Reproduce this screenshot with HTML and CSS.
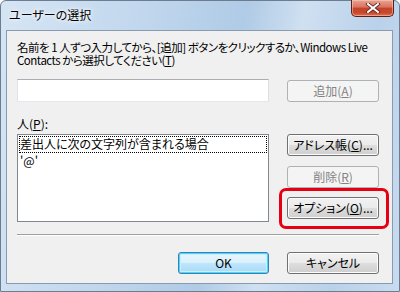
FILE: index.html
```html
<!DOCTYPE html>
<html lang="ja">
<head>
<meta charset="utf-8">
<link rel="stylesheet" href="styles.css">
</head>
<body>
<div class="window">
  <div class="titlebar">
    <span class="title">ユーザーの選択</span>
    <div class="close">
      <svg width="16" height="10" viewBox="0 0 16 10"><path d="M3 1 L13 9 M13 1 L3 9" stroke="#5a2020" stroke-width="3.6" stroke-linecap="square"/><path d="M3 1 L13 9 M13 1 L3 9" stroke="#ffffff" stroke-width="2" stroke-linecap="square"/></svg>
    </div>
  </div>
  <div class="client">
    <p class="intro"><span class="line">名前を 1 人ずつ入力してから、[追加] ボタンをクリックするか、Windows Live</span><span class="line">Contacts から選択してください(<u>T</u>)</span></p>
    <div class="row input-row">
      <div class="textbox"></div>
      <button class="btn disabled">追加(<u>A</u>)</button>
    </div>
    <div class="label">人(<u>P</u>):</div>
    <div class="row list-row">
      <div class="listbox">
        <div class="item focused">差出人に次の文字列が含まれる場合</div>
        <div class="item">'@'</div>
      </div>
      <div class="side">
        <button class="btn">アドレス帳(<u>C</u>)...</button>
        <button class="btn disabled">削除(<u>R</u>)</button>
        <div class="highlight"><button class="btn">オプション(<u>O</u>)...</button></div>
      </div>
    </div>
    <div class="separator"></div>
    <div class="footer">
      <button class="btn default">OK</button>
      <button class="btn">キャンセル</button>
    </div>
  </div>
</div>
</body>
</html>
```

FILE: styles.css
```css
html, body {
  margin: 0;
  padding: 0;
}
body {
  width: 400px;
  height: 292px;
  overflow: hidden;
  background: #ffffff;
  font-family: "Noto Sans CJK JP", "Noto Sans", sans-serif;
  font-size: 12px;
  color: #000;
  font-feature-settings: "palt" 1;
}
.window {
  box-sizing: border-box;
  width: 400px;
  height: 292px;
  border: 1px solid #6b7d8f;
  border-radius: 6px 6px 0 0;
  background: linear-gradient(100deg, #d6e5f4 0%, #c2d8ee 30%, #b0cbe6 55%, #cfe0f1 68%, #b9d1ea 85%, #c8dcf0 100%);
  display: flex;
  flex-direction: column;
  padding: 0 6px 7px 5px;
}
.titlebar {
  height: 29px;
  flex: none;
  display: flex;
  align-items: flex-start;
  justify-content: space-between;
}
.title {
  margin: 6px 0 0 3px;
  font-size: 12px;
  line-height: 16px;
  color: #000;
  text-shadow: 0 0 6px #ffffff, 0 0 3px #ffffff;
}
.close {
  width: 43px;
  height: 17px;
  margin-top: -1px;
  margin-right: -1px;
  box-sizing: border-box;
  border: 1px solid #5c1f14;
  border-top: none;
  border-radius: 0 0 5px 5px;
  background: linear-gradient(#e8a493 0%, #d9735c 45%, #c3432b 50%, #c9482c 80%, #e07050 100%);
  box-shadow: inset 0 0 0 1px rgba(255,210,200,0.5);
  display: flex;
  align-items: center;
  justify-content: center;
}
.close svg { display: block; }
.client {
  flex: 1;
  box-sizing: border-box;
  border: 1px solid #8a9bb0;
  background: #f0f0f0;
  padding: 10px 0 0 10px;
  display: flex;
  flex-direction: column;
}
.intro {
  margin: 0;
  line-height: 13px;
  font-size: 11.5px;
  letter-spacing: -0.5px;
  display: flex;
  flex-direction: column;
}
.line {
  white-space: nowrap;
  height: 13px;
}
u { text-decoration: underline; text-underline-offset: 1px; }
.row {
  display: flex;
  gap: 18px;
}
.input-row {
  margin-top: 12px;
  align-items: flex-start;
}
.textbox {
  box-sizing: border-box;
  width: 252px;
  height: 23px;
  background: #fff;
  border: 1px solid #abadb3;
  border-color: #abadb3 #dbdfe6 #e3e9ef #e2e3ea;
}
.btn {
  box-sizing: border-box;
  width: 92px;
  height: 22px;
  padding: 0;
  font-family: inherit;
  font-feature-settings: "palt" 1;
  font-size: 12px;
  line-height: 18px;
  color: #000;
  border: 1px solid #707070;
  border-radius: 3px;
  background: linear-gradient(#f2f2f2 0%, #ebebeb 48%, #dddddd 52%, #cfcfcf 100%);
  box-shadow: inset 0 0 0 1px #fcfcfc;
}
.input-row .btn { margin-top: 1px; }
.btn.disabled {
  color: #838383;
  border-color: #adb2b5;
  background: #f4f4f4;
  box-shadow: none;
}
.btn.default {
  border-color: #3c7fb1;
  background: linear-gradient(#eaf6fd 0%, #d9f0fc 48%, #bee6fd 52%, #a7d9f5 100%);
  box-shadow: inset 0 0 0 1px #48d8fb, inset 0 0 0 2px #c8f0fd;
}
.label {
  margin-top: 15px;
  line-height: 14px;
  height: 16px;
}
.list-row {
  margin-top: 1px;
}
.listbox {
  box-sizing: border-box;
  width: 252px;
  height: 88px;
  background: #fff;
  border: 1px solid #828790;
  padding: 1px;
}
.item {
  box-sizing: border-box;
  height: 15px;
  line-height: 15px;
  padding-left: 1px;
  white-space: nowrap;
  overflow: hidden;
}
.item.focused {
  outline: 1px dotted #000;
  outline-offset: -1px;
  height: 17px;
  line-height: 16px;
}
.side {
  display: flex;
  flex-direction: column;
  gap: 10px;
}
.highlight {
  position: relative;
  margin-top: -1px;
}
.highlight::after {
  content: "";
  position: absolute;
  left: -8px;
  right: -10px;
  top: -9px;
  bottom: -10px;
  border: 3px solid #e60012;
  border-radius: 7px;
}
.highlight .btn { display: block; }
.separator {
  margin-top: 12px;
  width: 362px;
  height: 1px;
  background: #a0a0a0;
  border-bottom: 1px solid #fff;
}
.footer {
  margin-top: 16px;
  width: 362px;
  display: flex;
  justify-content: flex-end;
  gap: 18px;
}
.footer .btn.default { width: 91px; }
```
